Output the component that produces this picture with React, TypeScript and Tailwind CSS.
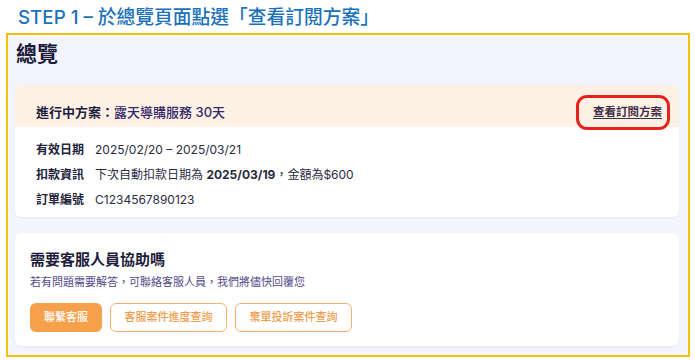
import React from "react";

const font = { fontFamily: '"Inter", "Noto Sans CJK TC", sans-serif' } as React.CSSProperties;

export default function App() {
  return (
    <div className="w-[695px] h-[360px] bg-white overflow-hidden" style={font}>
      <div className="pl-[18px] pt-[5px] h-[33px]">
        <h1 className="text-[18.75px] leading-[26px] font-medium text-[#1c72b8] whitespace-nowrap">
          STEP 1 – 於總覽頁面點選「查看訂閱方案」
        </h1>
      </div>
      <div className="ml-[6px] w-[684px] h-[324px] border-2 border-[#f5c10f] bg-[#f4f5fc] pl-[7px] pr-[9px] pt-[5px]">
        <h2 className="pl-[1px] text-[21px] leading-[28px] font-bold text-[#1d1d3a]">總覽</h2>
        <div className="mt-[17px] h-[132px] bg-white rounded-md shadow-[0_1px_2px_rgba(60,60,120,0.08)] overflow-hidden">
          <div className="relative h-[42px] bg-[#fdf1e6] pl-[21px] pr-[17px] pt-[18px] flex justify-between">
            <div className="text-[13px] leading-[18px] text-[#1e1e3c]">
              <span className="font-bold">進行中方案：</span>
              <span className="font-medium text-[#35296b]">露天導購服務 30天</span>
            </div>
            <a className="text-[11.5px] leading-[18px] font-semibold text-[#3f2c45] underline underline-offset-2 cursor-pointer">
              查看訂閱方案
            </a>
            <div className="absolute right-[9px] top-[10px] w-[94px] h-[35px] border-[3px] border-[#e5221b] rounded-[11px]" />
          </div>
          <div className="pt-[10px] pl-[21px] text-[12px] text-[#2b2b3f]">
            <div className="h-[25px] flex items-center">
              <span className="w-[59px] font-bold text-[#23233a]">有效日期</span>
              <span>2025/02/20 – 2025/03/21</span>
            </div>
            <div className="h-[25px] flex items-center">
              <span className="w-[59px] font-bold text-[#23233a]">扣款資訊</span>
              <span>
                下次自動扣款日期為 <span className="font-bold">2025/03/19</span>，金額為$600
              </span>
            </div>
            <div className="h-[25px] flex items-center">
              <span className="w-[59px] font-bold text-[#23233a]">訂單編號</span>
              <span>C1234567890123</span>
            </div>
          </div>
        </div>
        <div className="mt-[16px] h-[113px] bg-white rounded-md shadow-[0_1px_2px_rgba(60,60,120,0.08)] pl-[15px] pt-[17px]">
          <div className="text-[15px] leading-[20px] font-bold text-[#1d1d3a]">需要客服人員協助嗎</div>
          <div className="mt-[4px] text-[11px] leading-[16px] text-[#554a8a]">
            若有問題需要解答，可聯絡客服人員，我們將儘快回覆您
          </div>
          <div className="mt-[13px] flex gap-2">
            <button className="h-[29px] w-[72px] rounded-md bg-[#f7a04c] text-white text-[11px] font-medium">
              聯繫客服
            </button>
            <button className="h-[29px] w-[117px] rounded-md border-[1.5px] border-[#f5b170] text-[#ef9d4c] text-[11px] font-medium bg-white">
              客服案件進度查詢
            </button>
            <button className="h-[29px] w-[117px] rounded-md border-[1.5px] border-[#f5b170] text-[#ef9d4c] text-[11px] font-medium bg-white">
              棄單投訴案件查詢
            </button>
          </div>
        </div>
      </div>
    </div>
  );
}
